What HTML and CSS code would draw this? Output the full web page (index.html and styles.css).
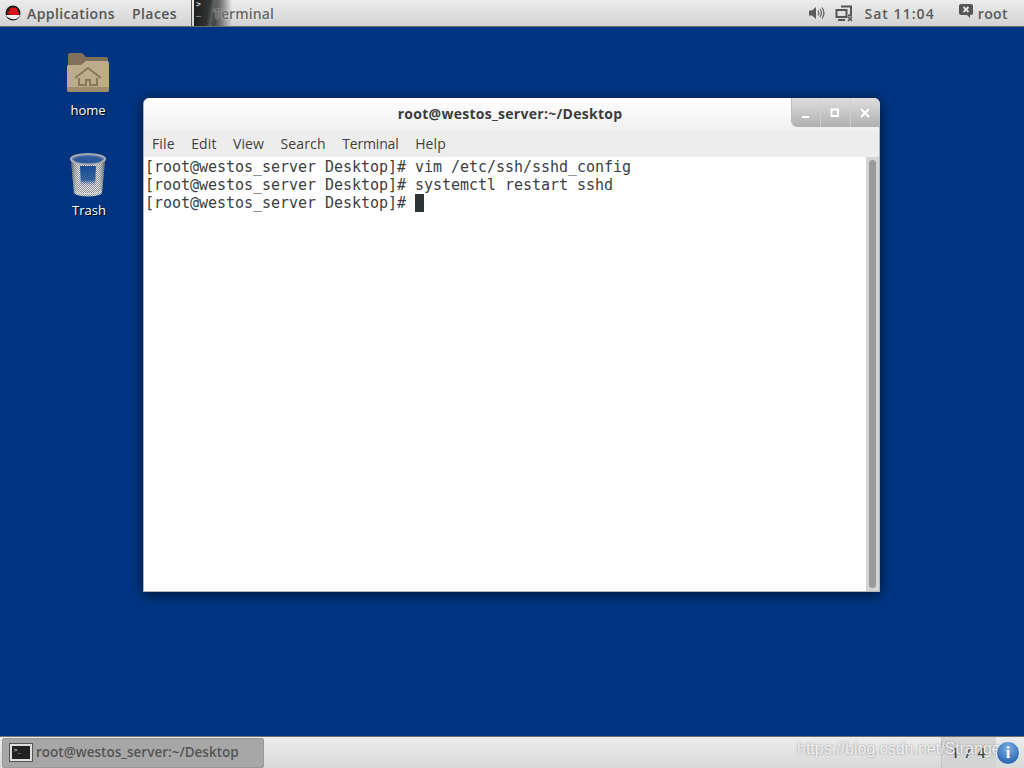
FILE: index.html
```html
<!DOCTYPE html>
<html lang="en">
<head>
<meta charset="utf-8">
<title>Desktop</title>
<link rel="stylesheet" href="styles.css">
</head>
<body>
<header class="topbar">
  <div class="top-left">
    <svg class="redhat" width="16" height="16" viewBox="0 0 16 16"><circle cx="8" cy="8" r="7.5" fill="#1c1c1c"/><path d="M1 10c2 5 12 6 14 0z" fill="#eee"/><path d="M2 8c0-1 1-1 2-1 0-3 2-5 3.500-4.500 1 .3 2 .2 3 0C12 2.500 12.500 5 13 7c1 .5 1.800 1.500 1 2.500-2 1-9 1-12-1.500z" fill="#d5161c"/></svg>
    <span class="menu-item apps">Applications</span>
    <span class="menu-item places">Places</span>
    <span class="sep"></span>
    <div class="app-tab">
      <div class="app-thumb"><span class="prompt">&gt;<br>_</span></div>
      <span class="menu-item app-name">Terminal</span>
    </div>
  </div>
  <div class="top-right">
    <svg width="17" height="14" viewBox="0 0 17 14" class="vol"><path d="M1 4.500h3L8 1v12L4 9.500H1z" fill="#5a5a5a"/><path d="M10 4.500c1 1.500 1 3.500 0 5M12 3c1.800 2.500 1.800 5.500 0 8M14 1.500c2.500 3.500 2.500 7.500 0 11" fill="none" stroke="#5a5a5a" stroke-width="1.200"/></svg>
    <svg width="18" height="17" viewBox="0 0 18 17" class="net"><path d="M6 1.500h10v9h-3M1.500 5h10v7h-10z" fill="none" stroke="#555" stroke-width="2"/><path d="M3 14h7v2H3z" fill="#555"/><path d="M13 12l4 4m0-4l-4 4" stroke="#555" stroke-width="1.600"/></svg>
    <span class="menu-item clock">Sat 11:04</span>
    <svg width="16" height="16" viewBox="0 0 16 16" class="chat"><path d="M3 1h10a2 2 0 0 1 2 2v7a2 2 0 0 1-2 2h-1v3l-3-3H3a2 2 0 0 1-2-2V3a2 2 0 0 1 2-2z" fill="#555"/><path d="M5.500 4l5 5m0-5l-5 5" stroke="#e4e4e4" stroke-width="1.800"/></svg>
    <span class="menu-item user">root</span>
  </div>
</header>

<main class="desktop">
  <div class="desk-icon home-icon">
    <svg width="46" height="42" viewBox="0 0 46 42"><path d="M3 3a2 2 0 0 1 2-2h12l4 4h20a2 2 0 0 1 2 2v10H3z" fill="#80705a"/><path d="M2 14a2 2 0 0 1 2-1h12l5-4h21a2 2 0 0 1 2 2v27a2 2 0 0 1-2 2H4a2 2 0 0 1-2-2z" fill="#bdab8b"/><path d="M2 35h42v3a2 2 0 0 1-2 2H4a2 2 0 0 1-2-2z" fill="#a08e6f"/><path d="M10 26l13-10 13 10M14 26v7h7v-5h4v5h7v-7" fill="none" stroke="#8a7858" stroke-width="2"/></svg>
    <span class="desk-label">home</span>
  </div>
  <div class="desk-icon trash-icon">
    <svg width="40" height="46" viewBox="0 0 40 46">
      <defs>
        <pattern id="mesh" width="2" height="2" patternUnits="userSpaceOnUse"><rect width="2" height="2" fill="#e2e4e6"/><rect width="1" height="1" fill="#7c8288"/><rect x="1" y="1" width="1" height="1" fill="#7c8288"/></pattern>
        <linearGradient id="edge" x1="0" x2="1" y1="0" y2="0"><stop offset="0" stop-color="#33383d" stop-opacity=".75"/><stop offset=".25" stop-color="#fff" stop-opacity=".1"/><stop offset=".75" stop-color="#fff" stop-opacity=".1"/><stop offset="1" stop-color="#33383d" stop-opacity=".75"/></linearGradient>
        <linearGradient id="blue" x1="0" x2="0" y1="0" y2="1"><stop offset="0" stop-color="#1a4b8e"/><stop offset=".7" stop-color="#1f5197" stop-opacity=".85"/><stop offset="1" stop-color="#6f8db5" stop-opacity="0"/></linearGradient>
      </defs>
      <path d="M2 8l3 33c2 4.500 26 4.500 28 0l3-33z" fill="url(#mesh)"/>
      <path d="M2 8l3 33c2 4.500 26 4.500 28 0l3-33z" fill="url(#edge)"/>
      <path d="M11 14h16l-1 20H12z" fill="url(#blue)"/>
      <path d="M5.500 39c3 3.500 24 3.500 27 0" fill="none" stroke="#d8dadc" stroke-width="1"/>
      <ellipse cx="19" cy="7" rx="17" ry="5" fill="#4f74a8" stroke="#a9adb1" stroke-width="2.200"/>
      <ellipse cx="19" cy="8" rx="14" ry="3.500" fill="#2c5a9b"/>
    </svg>
    <span class="desk-label">Trash</span>
  </div>

  <section class="window">
    <div class="titlebar">
      <span class="win-title">root@westos_server:~/Desktop</span>
      <div class="win-buttons">
        <span class="win-btn"><svg width="10" height="10" viewBox="0 0 10 10"><path d="M1 8h7v2H1z" fill="#fff"/></svg></span>
        <span class="win-btn"><svg width="10" height="10" viewBox="0 0 10 10"><path d="M1.500 1.500h6.500v6.500H1.500z" fill="none" stroke="#fff" stroke-width="2"/></svg></span>
        <span class="win-btn last"><svg width="10" height="10" viewBox="0 0 10 10"><path d="M1 1l8 8m0-8l-8 8" stroke="#fff" stroke-width="2.200"/></svg></span>
      </div>
    </div>
    <nav class="menubar">
      <span>File</span><span>Edit</span><span>View</span><span>Search</span><span class="menu-term">Terminal</span><span>Help</span>
    </nav>
    <div class="term-wrap">
      <pre class="terminal">[root@westos_server Desktop]# vim /etc/ssh/sshd_config
[root@westos_server Desktop]# systemctl restart sshd
[root@westos_server Desktop]# <span class="cursor"> </span></pre>
      <div class="scrollbar"><div class="thumb"></div></div>
    </div>
  </section>
</main>

<footer class="bottombar">
  <div class="task">
    <span class="task-icon"><span class="prompt small">&gt;_</span></span>
    <span class="task-label">root@westos_server:~/Desktop</span>
  </div>
  <div class="pager">1 / 4</div>
  <span class="watermark">https://blog.csdn.net/Stranger-</span>
  <span class="info">i</span>
</footer>
</body>
</html>
```
FILE: styles.css
```css
* { box-sizing: border-box; }
html, body { margin: 0; height: 100%; }
body {
  width: 1024px; height: 768px; overflow: hidden;
  display: flex; flex-direction: column;
  font-family: "Open Sans", "Noto Sans", sans-serif;
  background: #013582;
}
.topbar {
  height: 27px; flex: none;
  display: flex; justify-content: space-between; align-items: center;
  background: linear-gradient(#ececec, #d3d3d3);
  border-bottom: 1px solid #6f6f6f;
}
.top-left, .top-right { display: flex; align-items: center; height: 100%; }
.redhat { margin-left: 5px; margin-right: 6px; }
.menu-item { font-size: 14px; color: #555; font-weight: 600; letter-spacing: .4px; }
.apps { margin-right: 17px; }
.sep { width: 1px; height: 26px; background: #555; margin-left: 14px; margin-right: 2px; }
.app-tab { display: flex; align-items: center; height: 26px; position: relative; }
.app-thumb {
  width: 38px; height: 26px; padding: 1px 2px;
  background:
    linear-gradient(100deg, transparent 38%, rgba(170,190,180,.28) 48%, transparent 58%),
    linear-gradient(90deg, #1c1f1d 0, #383b39 50%, #7c7c7c 72%, rgba(215,215,215,0) 100%);
}
.prompt { display: block; font: 8px/8px "DejaVu Sans Mono", monospace; color: #eee; }
.app-name { position: absolute; left: 19px; top: 4px; color: #666; letter-spacing: .1px; text-shadow: 0 0 2px rgba(255,255,255,.75); }
.top-right { padding-right: 16px; }
.vol { margin-right: 10px; }
.net { margin-right: 11px; }
.clock { margin-right: 23px; color: #5a5a5a; letter-spacing: 1.05px; }
.chat { margin-right: 4px; margin-top: -4px; }
.user { color: #5a5a5a; letter-spacing: .4px; }

.desktop { flex: 1; position: relative; }
.desk-icon { position: absolute; display: flex; flex-direction: column; align-items: center; width: 90px; }
.home-icon { left: 43px; top: 25px; }
.trash-icon { left: 44px; top: 125px; }
.desk-label { font-size: 13px; line-height: 18px; color: #fff; text-shadow: 1px 1px 1px #000; margin-top: 7px; }
.trash-icon .desk-label { margin-top: 3px; }

.window {
  position: absolute; left: 143px; top: 71px; width: 737px; height: 494px;
  display: flex; flex-direction: column;
  border-radius: 6px 6px 0 0;
  background: #ededed;
  box-shadow: 0 2px 14px rgba(0,0,0,.65);
  border: 1px solid #b4b4b4;
  border-top: 0;
}
.titlebar {
  height: 32px; flex: none; position: relative;
  display: flex; align-items: center; justify-content: center;
  background: linear-gradient(#fff, #f0f0f0);
  border-radius: 6px 6px 0 0;
}
.win-title { font-size: 14px; font-weight: 700; color: #3d3d3d; margin: 0 3px 2px 0; letter-spacing: .28px; }
.win-buttons {
  position: absolute; right: -1px; top: 0; height: 29px;
  display: flex;
  background: linear-gradient(#dedede, #b0b0b0);
  border-radius: 0 6px 0 6px;
  box-shadow: -1px 0 0 #bbb;
}
.win-btn { width: 29.500px; display: flex; align-items: center; justify-content: center; border-right: 1px solid #cfcfcf; }
.win-btn.last { border-right: 0; }
.menubar {
  height: 27px; flex: none;
  display: flex; align-items: center; gap: 16.500px;
  padding-left: 8px;
  background: #ededed;
  font-size: 14px; color: #3f3f3f; letter-spacing: .12px;
}
.menu-term { letter-spacing: -.15px; }
.term-wrap { flex: 1; display: flex; min-height: 0; }
.terminal {
  flex: 1; margin: 0; padding: 1px 1px;
  background: #fff; color: #3b4043;
  font: 15px/18px "DejaVu Sans Mono", monospace;
  letter-spacing: -.03px;
}
.cursor { display: inline-block; width: 9px; height: 18px; background: #2e3436; vertical-align: top; }
.scrollbar { width: 13px; flex: none; background: #d4d4d4; padding: 3px 3px 3px 3px; }
.thumb { height: 100%; background: #9a9a9a; border-radius: 4px; }

.bottombar {
  height: 32px; flex: none; position: relative;
  display: flex; align-items: center;
  background: linear-gradient(#ececec, #d8d8d8);
  border-top: 1px solid #6f6f6f;
}
.task {
  margin-left: 2px; width: 262px; height: 30px;
  display: flex; align-items: center; padding-left: 7px;
  background: #a7a7a7; border: 1px solid #999; border-radius: 2px;
}
.task-icon {
  width: 22px; height: 17px; margin-right: 4px;
  background: #222; border: 2px solid #ddd; outline: 1px solid #555; padding-left: 2px;
}
.prompt.small { font-size: 6px; line-height: 8px; }
.task-label { font-size: 13.500px; font-weight: 600; color: #555; margin-top: -2px; }
.pager {
  position: absolute; left: 941px; top: 0; width: 55px; height: 31px;
  display: flex; align-items: center; justify-content: center;
  font-size: 14px; color: #444; font-weight: 600; letter-spacing: 1.500px;
  background: #d4d4d4; border-left: 1px solid #c4c4c4;
}
.watermark {
  position: absolute; left: 797px; top: 0;
  font: 16px/24px "Liberation Sans", sans-serif;
  color: rgba(255,255,255,.85);
  text-shadow: 0 0 2px rgba(90,90,90,.7);
}
.info {
  position: absolute; left: 996px; top: 4px; width: 24px; height: 24px; border-radius: 50%;
  background: radial-gradient(circle at 50% 30%, #7fb0e0, #2b68b4 75%);
  border: 1px solid #dfe8f2;
  color: #fff; font: 700 16px/22px "Liberation Serif", serif; text-align: center;
}
```
